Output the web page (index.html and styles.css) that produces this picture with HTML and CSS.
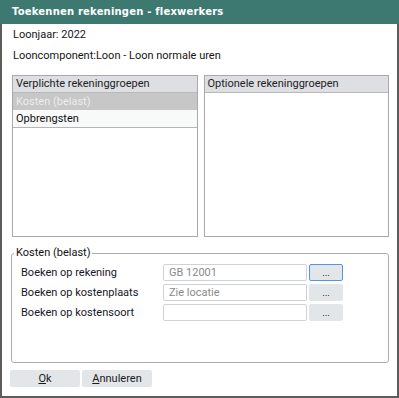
FILE: index.html
```html
<!DOCTYPE html>
<html lang="nl">
<head>
    <meta charset="UTF-8">
    <title>Toekennen rekeningen - flexwerkers</title>
    <link rel="stylesheet" href="styles.css">
</head>
<body>
    <div class="window">
        <div class="titlebar">Toekennen rekeningen - flexwerkers</div>

        <div class="content">
            <div class="info">Loonjaar: 2022</div>
            <div class="info">Looncomponent:Loon - Loon normale uren</div>

            <div class="lists">
                <div class="list">
                    <div class="list-header">Verplichte rekeninggroepen</div>
                    <div class="list-row selected">Kosten (belast)</div>
                    <div class="list-row last">Opbrengsten</div>
                </div>
                <div class="list">
                    <div class="list-header">Optionele rekeninggroepen</div>
                </div>
            </div>

            <fieldset class="group">
                <legend>Kosten (belast)</legend>
                <div class="field">
                    <label>Boeken op rekening</label>
                    <input type="text" value="GB 12001" readonly>
                    <button class="pick focus">...</button>
                </div>
                <div class="field">
                    <label>Boeken op kostenplaats</label>
                    <input type="text" value="Zie locatie" readonly>
                    <button class="pick">...</button>
                </div>
                <div class="field">
                    <label>Boeken op kostensoort</label>
                    <input type="text" value="" readonly>
                    <button class="pick">...</button>
                </div>
            </fieldset>

            <div class="actions">
                <button class="btn"><u>O</u>k</button>
                <button class="btn"><u>A</u>nnuleren</button>
            </div>
        </div>
    </div>
</body>
</html>
```

FILE: styles.css
```css
body {
    margin: 0;
    font-family: Roboto, "Liberation Sans", sans-serif;
    font-size: 11px;
    color: #151515;
    background: #fff;
}

.window {
    width: 399px;
    height: 398px;
    display: flex;
    flex-direction: column;
}

.titlebar {
    height: 24px;
    line-height: 23px;
    padding-left: 12px;
    background-color: #3e7971;
    color: #fff;
    font-family: "DejaVu Sans", sans-serif;
    font-weight: bold;
    font-size: 10px;
    letter-spacing: 0.2px;
}

.content {
    flex: 1;
    border: 2px solid #5c5c5c;
    border-top: none;
    padding: 4px 8px 0 10px;
    display: flex;
    flex-direction: column;
}

.info {
    height: 14px;
    line-height: 14px;
    padding-left: 1px;
    margin-bottom: 7px;
}

.lists {
    display: flex;
    gap: 6px;
    margin-top: 5px;
    height: 162px;
}

.list {
    flex: 1;
    border: 1px solid #a9a9a9;
    background: #fff;
}

.list-header {
    height: 16px;
    line-height: 16px;
    padding-left: 3px;
    background-color: #dedfe2;
    border-bottom: 1px solid #b9b9b9;
    color: #222;
}

.list-row {
    height: 17px;
    line-height: 17px;
    padding-left: 3px;
}

.list-row.selected {
    background-color: #c7c7c7;
    color: #ececec;
}

.list-row.last {
    background-color: #f8faf9;
    border-bottom: 1px solid #b5b5b5;
    color: #111;
}

.group {
    margin: 9px 0 0 -1px;
    padding: 4px 0 0 9px;
    height: 111px;
    border: 1px solid #ababab;
    border-radius: 3px;
}

.group legend {
    padding: 0 2px;
    margin-left: -7px;
    line-height: 14px;
    color: #111;
}

.field {
    display: flex;
    align-items: center;
    height: 17px;
    margin-bottom: 3px;
}

.field label {
    width: 142px;
    color: #161626;
}

.field input {
    box-sizing: border-box;
    width: 144px;
    height: 17px;
    margin: 0;
    padding: 0 5px;
    border: 1px solid #cdd3d8;
    border-radius: 2px;
    font-family: Roboto, "Liberation Sans", sans-serif;
    font-size: 11px;
    color: #8a8a8a;
    outline: none;
}

.pick {
    box-sizing: border-box;
    width: 34px;
    height: 17px;
    margin-left: 2px;
    padding: 0;
    border: 1px solid #e3e6e9;
    border-radius: 2px;
    background-color: #e3e6e9;
    color: #222;
    font-size: 9px;
    line-height: 12px;
}

.pick.focus {
    border-color: #5693e8;
}

.actions {
    display: flex;
    gap: 2px;
    margin: 7px 0 0 -2px;
}

.btn {
    width: 70px;
    height: 17px;
    padding: 0;
    border: none;
    border-radius: 2px;
    background-color: #e3e6e9;
    font-family: Roboto, "Liberation Sans", sans-serif;
    font-size: 11px;
    color: #1a1a1a;
}
```
